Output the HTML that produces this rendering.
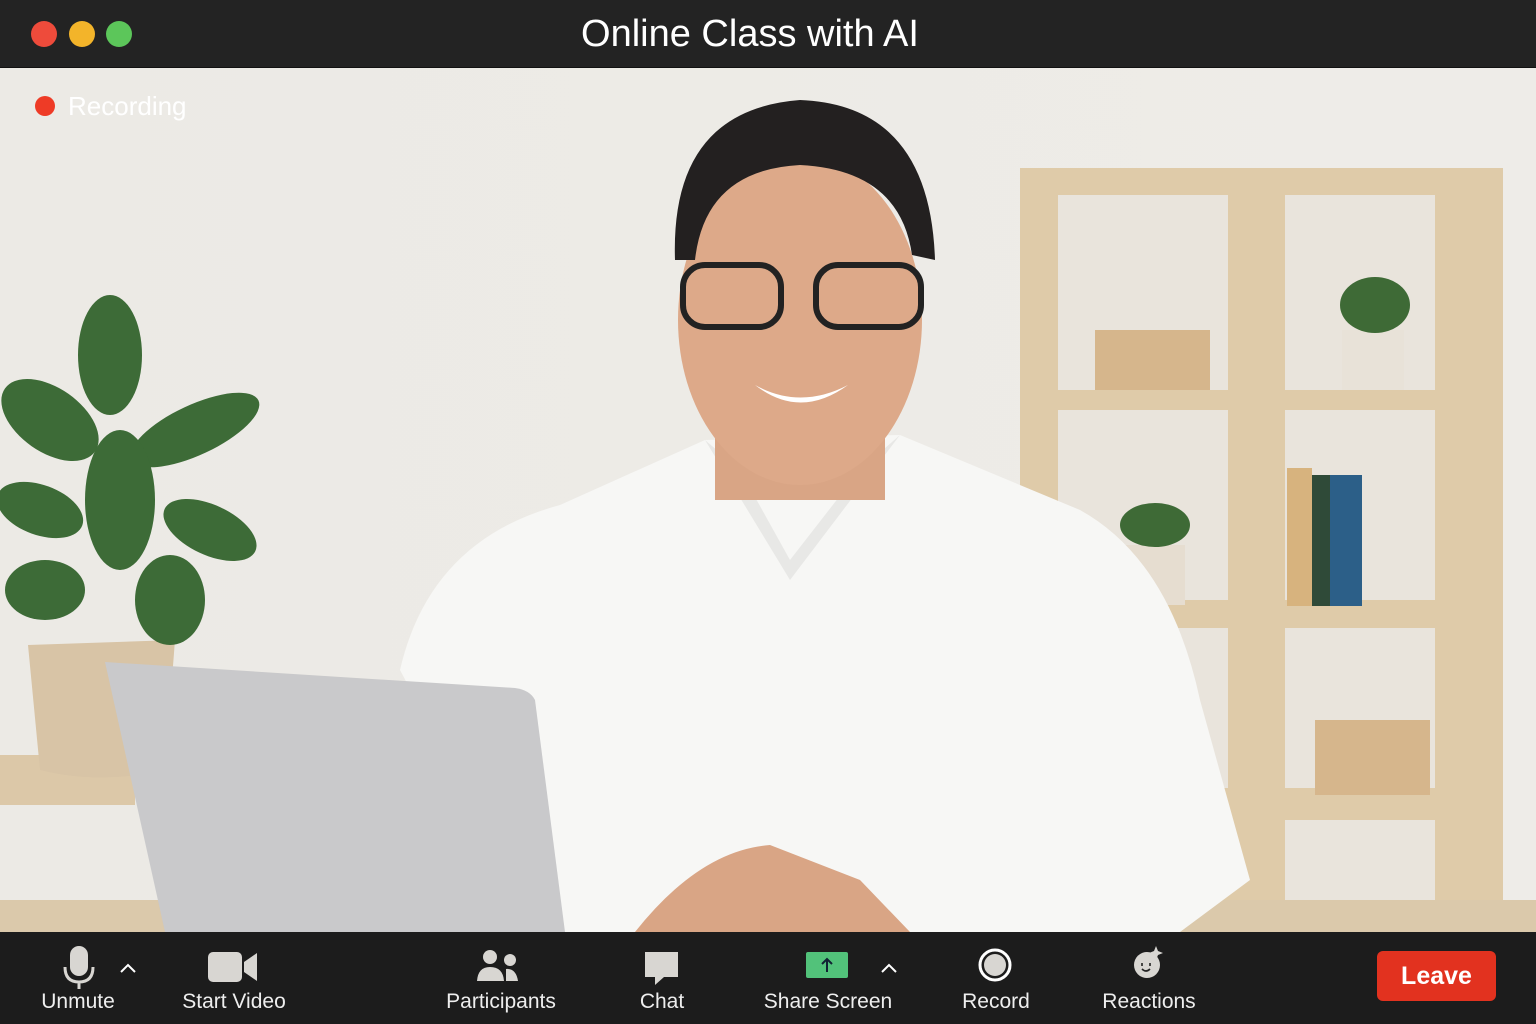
<!DOCTYPE html><html><head><style>
body{margin:0;width:1536px;height:1024px;overflow:hidden;font-family:"Liberation Sans",sans-serif;background:#1c1c1c}
.tb{position:absolute;left:0;top:0;width:1536px;height:67px;background:#232323;border-bottom:1px solid #111}
.d{position:absolute;top:21px;width:26px;height:26px;border-radius:50%}
.t{position:absolute;left:0;width:1500px;text-align:center;top:13px;color:#fff;font-size:38px}
.lb{position:absolute;top:990px;color:#eee;font-size:21px;text-align:center;width:160px}
</style></head><body>
<div class="tb"><div class="d" style="left:31px;background:#ee4b3b"></div><div class="d" style="left:69px;background:#f3b42a"></div><div class="d" style="left:106px;background:#5cc65a"></div><div class="t">Online Class with AI</div></div>
<svg style="position:absolute;left:0;top:68px" width="1536" height="864" viewBox="0 68 1536 864">
<defs><linearGradient id="w" x1="0" x2="1"><stop offset="0" stop-color="#eceae5"/><stop offset="1" stop-color="#eeece8"/></linearGradient></defs>
<rect x="0" y="68" width="1536" height="864" fill="url(#w)"/>
<rect x="0" y="755" width="135" height="50" fill="#dcc8a8"/>
<rect x="1020" y="168" width="483" height="735" fill="#dfcba9"/>
<rect x="1058" y="195" width="170" height="195" fill="#e9e4dc"/><rect x="1285" y="195" width="150" height="195" fill="#e9e4dc"/>
<rect x="1058" y="410" width="170" height="190" fill="#e9e4dc"/><rect x="1285" y="410" width="150" height="190" fill="#e9e4dc"/>
<rect x="1058" y="628" width="170" height="160" fill="#e9e4dc"/><rect x="1285" y="628" width="150" height="160" fill="#e9e4dc"/>
<rect x="1285" y="820" width="150" height="80" fill="#e9e4dc"/>
<rect x="1095" y="330" width="115" height="60" fill="#d6b68c"/><rect x="1315" y="720" width="115" height="75" fill="#d6b68c"/>
<rect x="1342" y="330" width="62" height="60" fill="#e8e2d8"/><ellipse cx="1375" cy="305" rx="35" ry="28" fill="#3e6a36"/>
<rect x="1125" y="545" width="60" height="60" fill="#e6ddd0"/><ellipse cx="1155" cy="525" rx="35" ry="22" fill="#3e6a36"/>
<rect x="1287" y="468" width="25" height="138" fill="#d7b37e"/><rect x="1312" y="475" width="18" height="131" fill="#2f4a38"/><rect x="1330" y="475" width="32" height="131" fill="#2c5f88"/>
<path d="M28 645 L175 640 L165 770 Q100 785 40 770 Z" fill="#d8c4a6"/>
<g fill="#3d6b37"><ellipse cx="110" cy="355" rx="32" ry="60"/><ellipse cx="50" cy="420" rx="55" ry="32" transform="rotate(35 50 420)"/><ellipse cx="195" cy="430" rx="70" ry="25" transform="rotate(-25 195 430)"/><ellipse cx="40" cy="510" rx="45" ry="25" transform="rotate(20 40 510)"/><ellipse cx="210" cy="530" rx="50" ry="25" transform="rotate(25 210 530)"/><ellipse cx="45" cy="590" rx="40" ry="30"/><ellipse cx="170" cy="600" rx="35" ry="45"/><ellipse cx="120" cy="500" rx="35" ry="70"/></g>
<rect x="0" y="900" width="1536" height="32" fill="#dbc9ab"/>
<path d="M400 670 Q430 540 560 505 L705 440 L900 435 L1080 510 Q1170 560 1200 700 L1250 880 L1180 932 L540 932 Z" fill="#f7f7f5"/>
<path d="M705 440 L790 580 L900 435 L860 470 L790 560 L740 470 Z" fill="#e8e8e6"/>
<rect x="715" y="380" width="170" height="120" fill="#d9a585"/>
<ellipse cx="800" cy="320" rx="122" ry="165" fill="#dda989"/>
<path d="M675 260 Q670 110 800 100 Q930 105 935 260 L912 255 Q900 170 800 165 Q705 170 695 260 Z" fill="#232020"/>
<rect x="683" y="265" width="98" height="62" rx="22" fill="none" stroke="#222" stroke-width="6"/><rect x="816" y="265" width="105" height="62" rx="22" fill="none" stroke="#222" stroke-width="6"/>
<path d="M755 385 Q800 410 848 385 Q800 420 755 385Z" fill="#fff"/>
<path d="M635 932 Q700 850 770 845 L860 880 L910 932Z" fill="#d9a585"/>
<path d="M105 662 L515 688 Q530 690 535 700 L565 932 L165 932 Z" fill="#c9c9cb"/>
</svg>
<div style="position:absolute;left:35px;top:96px;width:20px;height:20px;border-radius:50%;background:#ee3b26"></div>
<div style="position:absolute;left:68px;top:91px;color:#fff;font-size:26px">Recording</div>
<div style="position:absolute;left:0;top:932px;width:1536px;height:92px;background:#1c1c1c"></div>
<svg style="position:absolute;left:0;top:932px" width="1536" height="92">
<g fill="#d8d6d2" stroke="#d8d6d2">
<rect x="70" y="14" width="18" height="30" rx="9" stroke="none"/><path d="M65 35 Q65 50 79 50 Q93 50 93 35 M79 50 V57" fill="none" stroke-width="3"/>
<path d="M121 40 L128 33 L135 40" fill="none" stroke="#fff" stroke-width="2"/>
<rect x="208" y="20" width="34" height="30" rx="5" stroke="none"/><path d="M244 30 L257 21 V49 L244 40Z" stroke="none"/>
<circle cx="490" cy="25" r="7" stroke="none"/><circle cx="510" cy="28" r="6" stroke="none"/><path d="M477 49 Q478 35 490 35 Q503 35 504 49Z M506 49 V37 Q516 36 518 49Z" stroke="none"/>
<path d="M645 20 H678 V45 H664 L655 53 V45 H645Z" stroke="none" stroke-linejoin="round" stroke-width="4"/>
<path d="M882 40 L889 33 L896 40" fill="none" stroke="#fff" stroke-width="2"/>
<circle cx="995" cy="33" r="15" fill="none" stroke="#fff" stroke-width="3"/><circle cx="995" cy="33" r="11" stroke="none"/>
<circle cx="1147" cy="33" r="13" stroke="none"/><path d="M1156 14 l2 5 5 2 -5 2 -2 5 -2 -5 -5 -2 5 -2z" stroke="none"/>
</g>
<rect x="806" y="20" width="42" height="26" rx="2" fill="#52c27a"/><path d="M827 40 V27 M822 32 L827 27 L832 32" stroke="#123" stroke-width="2" fill="none"/>
<path d="M1142 31 v3 M1150 31 v3 M1142 37 q4 4 8 0" stroke="#222" stroke-width="1.6" fill="none"/>
<rect x="1377" y="19" width="119" height="50" rx="6" fill="#e2321f"/>
</svg>
<div style="position:absolute;left:1377px;top:951px;width:119px;height:50px;line-height:50px;text-align:center;color:#fff;font-size:25px;font-weight:bold">Leave</div>
<div class="lb" style="left:-2px">Unmute</div><div class="lb" style="left:154px">Start Video</div><div class="lb" style="left:421px">Participants</div><div class="lb" style="left:582px">Chat</div><div class="lb" style="left:748px">Share Screen</div><div class="lb" style="left:916px">Record</div><div class="lb" style="left:1069px">Reactions</div>
</body></html>
